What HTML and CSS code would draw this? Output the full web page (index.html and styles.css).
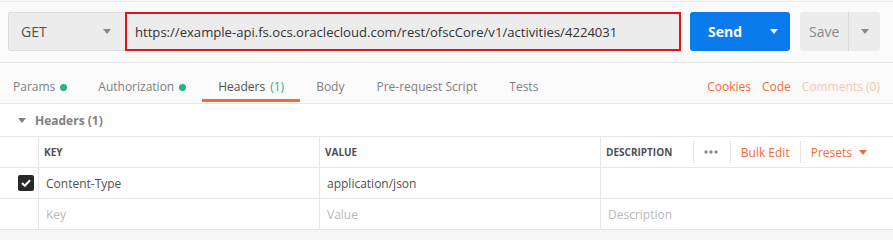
FILE: index.html
```html
<!DOCTYPE html>
<html>
<head>
<meta charset="utf-8">
<link rel="stylesheet" href="styles.css">
</head>
<body>
<div class="app">
  <div class="reqbar">
    <div class="method">
      <span>GET</span>
      <svg class="caret" width="8" height="5" viewBox="0 0 8 5"><path d="M0 0h8L4 5z" fill="#888"/></svg>
    </div>
    <div class="url">https://example-api.fs.ocs.oraclecloud.com/rest/ofscCore/v1/activities/4224031</div>
    <div class="send">
      <span class="send-label">Send</span>
      <svg width="8" height="5" viewBox="0 0 8 5"><path d="M0 0h8L4 5z" fill="#fff"/></svg>
    </div>
    <div class="save">
      <span class="save-label">Save</span>
      <span class="save-caret"><svg width="8" height="5" viewBox="0 0 8 5"><path d="M0 0h8L4 5z" fill="#888"/></svg></span>
    </div>
  </div>
  <div class="tabsrow">
    <div class="tabs">
      <div class="tab first">Params <span class="dot"></span></div>
      <div class="tab">Authorization <span class="dot"></span></div>
      <div class="tab active">Headers <span class="count">(1)</span></div>
      <div class="tab">Body</div>
      <div class="tab">Pre-request Script</div>
      <div class="tab">Tests</div>
    </div>
    <div class="links">
      <span class="link">Cookies</span>
      <span class="link">Code</span>
      <span class="link faded">Comments (0)</span>
    </div>
  </div>
  <div class="content">
    <div class="section-title">
      <svg width="8" height="5" viewBox="0 0 8 5"><path d="M0 0h8L4 5z" fill="#808080"/></svg>
      <span>Headers (1)</span>
    </div>
    <div class="table">
      <div class="row head">
        <div class="cell chk"></div>
        <div class="cell">KEY</div>
        <div class="cell">VALUE</div>
        <div class="cell desc">
          <span>DESCRIPTION</span>
          <div class="actions">
            <span class="sep"></span>
            <span class="dots"><svg width="14" height="4" viewBox="0 0 14 4"><circle cx="2" cy="2" r="1.7" fill="#8a8a8a"/><circle cx="7" cy="2" r="1.7" fill="#8a8a8a"/><circle cx="12" cy="2" r="1.7" fill="#8a8a8a"/></svg></span>
            <span class="sep"></span>
            <span class="action">Bulk Edit</span>
            <span class="sep"></span>
            <span class="action">Presets <svg width="8" height="5" viewBox="0 0 8 5"><path d="M0 0h8L4 5z" fill="#f26b3a"/></svg></span>
          </div>
        </div>
      </div>
      <div class="row">
        <div class="cell chk"><span class="checkbox"><svg width="10" height="8" viewBox="0 0 10 8"><path d="M1 4l2.8 2.8L9 1.2" fill="none" stroke="#fff" stroke-width="2"/></svg></span></div>
        <div class="cell">Content-Type</div>
        <div class="cell">application/json</div>
        <div class="cell"></div>
      </div>
      <div class="row">
        <div class="cell chk"></div>
        <div class="cell ph">Key</div>
        <div class="cell ph">Value</div>
        <div class="cell ph">Description</div>
      </div>
    </div>
    <div class="footer"></div>
  </div>
</div>
</body>
</html>
```
FILE: styles.css
```css
* { box-sizing: border-box; }
html, body { margin: 0; padding: 0; }
body {
  background: #fafafa;
  font-family: "Open Sans", "Liberation Sans", sans-serif;
  font-size: 12px;
  color: #505050;
  width: 893px;
  height: 240px;
  overflow: hidden;
}
.app { padding-top: 1px; }
.reqbar {
  border-top: 1px solid #ececec;
  border-bottom: 1px solid #e6e6e6;
  padding: 10px 8px 11px 8px;
  display: flex;
  align-items: stretch;
  height: 62px;
}
.method {
  width: 117px;
  background: #ececec;
  border: 1px solid #dcdcdc;
  border-right: none;
  border-radius: 3px 0 0 3px;
  display: flex;
  align-items: center;
  justify-content: space-between;
  padding: 0 14px 0 12px;
  font-size: 14px;
  color: #505050;
}
.url {
  width: 556px;
  background: #ececec;
  border: 2px solid #e3131b;
  display: flex;
  align-items: center;
  padding-left: 8px;
  font-size: 13.1px;
  color: #333;
  white-space: nowrap;
}
.send {
  margin-left: 9px;
  width: 100px;
  background: #097bed;
  border-radius: 3px;
  display: flex;
  align-items: center;
  justify-content: space-between;
  padding: 0 12px 0 18px;
}
.send-label { color: #fff; font-weight: 700; font-size: 14px; }
.save {
  margin-left: 10px;
  width: 80px;
  background: #ececec;
  border-radius: 3px;
  display: flex;
  align-items: stretch;
}
.save-label {
  width: 49px;
  border-right: 1px solid #d8d8d8;
  display: flex;
  align-items: center;
  padding-left: 9px;
  color: #888;
  font-size: 14px;
}
.save-caret { flex: 1; display: flex; align-items: center; justify-content: center; }
.tabsrow {
  display: flex;
  justify-content: space-between;
  border-bottom: 1px solid #e6e6e6;
  height: 41px;
}
.tabs { display: flex; }
.tab {
  padding: 15px 16px 3px 16px;
  line-height: 18px;
  height: 39px;
  color: #808080;
  border-bottom: 3px solid transparent;
  white-space: nowrap;
  display: flex;
  align-items: center;
  gap: 5px;
}
.tab.first { padding-left: 13px; padding-right: 15px; }
.tab.active { color: #505050; border-bottom-color: #f26b3a; }
.count { color: #26b47f; }
.dot {
  width: 7px; height: 7px; border-radius: 50%;
  background: #26b47f; display: inline-block;
}
.links {
  display: flex;
  gap: 11px;
  padding: 15px 13px 0 0;
  line-height: 18px;
}
.link { color: #f26b3a; }
.link.faded { color: #f9c4ae; }
.content { background: #fff; }
.section-title {
  height: 32px;
  display: flex;
  align-items: center;
  padding-left: 18px;
  padding-top: 1px;
  gap: 9px;
  font-weight: 700;
  color: #808080;
  font-size: 12px;
}
.table { border-top: 1px solid #e6e6e6; }
.row {
  display: grid;
  grid-template-columns: 38px 281px 281px 1fr;
  border-bottom: 1px solid #e6e6e6;
  height: 31px;
}
.cell {
  display: flex;
  align-items: center;
  padding-left: 7px;
  border-left: 1px solid #e6e6e6;
  color: #505050;
  white-space: nowrap;
}
.cell.chk { border-left: none; padding-left: 18px; }
.head .cell {
  font-size: 10px;
  font-weight: 700;
  color: #505050;
  padding-left: 5px;
}
.head .cell.chk { padding-left: 0; }
.cell.desc { justify-content: space-between; padding-right: 26px; }
.actions { display: flex; align-items: center; height: 100%; }
.sep { width: 1px; height: 22px; background: #e6e6e6; }
.dots { padding: 0 12px 0 10px; display: flex; align-items: center; }
.action {
  color: #f26b3a;
  font-size: 12px;
  font-weight: 400;
  padding: 0 0 0 10px;
  margin-right: 10px;
  display: flex;
  align-items: center;
  gap: 7px;
}
.actions .action:last-child { margin-right: 0; }
.checkbox {
  width: 16px; height: 16px;
  background: #282828;
  border-radius: 2px;
  display: flex; align-items: center; justify-content: center;
}
.ph { color: #b8b8b8; }
.footer { background: #f6f6f6; height: 20px; }
```
